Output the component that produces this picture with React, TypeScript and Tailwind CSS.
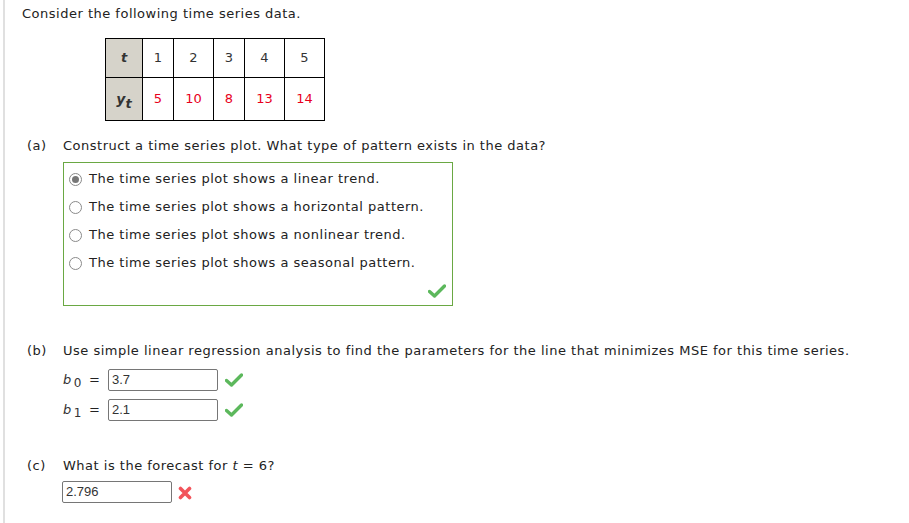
import React from 'react'

const T = ['1', '2', '3', '4', '5']
const Y = ['5', '10', '8', '13', '14']
const COLS = ['w-[31px]', 'w-[40px]', 'w-[31px]', 'w-[40px]', 'w-[40px]']

const OPTIONS = [
  'The time series plot shows a linear trend.',
  'The time series plot shows a horizontal pattern.',
  'The time series plot shows a nonlinear trend.',
  'The time series plot shows a seasonal pattern.',
]

function Check({ className = '' }: { className?: string }) {
  return (
    <svg viewBox="0 0 18 14" className={className}>
      <path d="M1.5 7.5 L6.5 12 L16.5 2" fill="none" stroke="#5cb85c" strokeWidth="3.4" strokeLinejoin="round" strokeLinecap="round" />
    </svg>
  )
}

function Cross({ className = '' }: { className?: string }) {
  return (
    <svg viewBox="0 0 14 14" className={className}>
      <path d="M2.5 2.5 L11.5 11.5 M11.5 2.5 L2.5 11.5" fill="none" stroke="#f2545b" strokeWidth="3.6" strokeLinecap="round" />
    </svg>
  )
}

function Radio({ on }: { on?: boolean }) {
  return (
    <span className="w-[13px] h-[13px] rounded-full border border-[#8a8a8a] bg-white flex items-center justify-center shrink-0">
      {on && <span className="w-[7px] h-[7px] rounded-full bg-[#777]" />}
    </span>
  )
}

function Field({ value }: { value: string }) {
  return (
    <div className="w-[110px] h-[22px] border border-[#767676] rounded-[2px] px-[3px] flex items-center font-['Liberation_Sans',Arial,sans-serif] text-[13px] tracking-normal text-[#333]">
      {value}
    </div>
  )
}

export default function App() {
  return (
    <div className="min-h-[523px] bg-white ml-[3px] border-l-2 border-[#e0e0e0] pl-[17px] pt-[6px] font-['DejaVu_Sans',Verdana,sans-serif] text-[13px] leading-[16px] tracking-[0.5px] text-[#222]">
      <p>Consider the following time series data.</p>

      {/* data table */}
      <div className="ml-[83px] mt-[16px] w-fit border-l border-t border-black tracking-normal">
        <div className="flex h-[39px]">
          <div className="w-[37px] border-r border-b border-black bg-[#d6d3ca] flex items-center justify-center italic font-bold text-[#333]">t</div>
          {T.map((v, i) => (
            <div key={v} className={`${COLS[i]} border-r border-b border-black flex items-center justify-center text-[#333]`}>{v}</div>
          ))}
        </div>
        <div className="flex h-[43px]">
          <div className="w-[37px] border-r border-b border-black bg-[#d6d3ca] flex items-center justify-center italic font-bold text-[#333]">
            <span className="text-[14px]">y</span><sub className="text-[13px] relative top-[5px]">t</sub>
          </div>
          {Y.map((v, i) => (
            <div key={i} className={`${COLS[i]} border-r border-b border-black flex items-center justify-center text-[#e8001c]`}>{v}</div>
          ))}
        </div>
      </div>

      {/* (a) */}
      <div className="flex mt-[17px]">
        <span className="w-[41px] pl-[5px]">(a)</span>
        <div>
          <p>Construct a time series plot. What type of pattern exists in the data?</p>
          <div className="mt-[8px] w-[390px] h-[144px] border border-[#6aa843] pt-[2px] pl-[5px] flex flex-col">
            {OPTIONS.map((o, i) => (
              <div key={o} className="flex items-center gap-[7px] h-[28px]">
                <Radio on={i === 0} />
                <span>{o}</span>
              </div>
            ))}
            <div className="flex-1 flex items-end justify-end pr-[6px] pb-[7px]">
              <Check className="w-[18px] h-[14px]" />
            </div>
          </div>
        </div>
      </div>

      {/* (b) */}
      <div className="flex mt-[37px]">
        <span className="w-[41px] pl-[5px]">(b)</span>
        <div>
          <p>Use simple linear regression analysis to find the parameters for the line that minimizes MSE for this time series.</p>
          <div className="mt-[10px] flex flex-col gap-[8px]">
            {[['0', '3.7'], ['1', '2.1']].map(([s, v]) => (
              <div key={s} className="flex items-center h-[22px]">
                <span className="w-[26px] text-[#333]">
                  <i>b</i><sub className="text-[12px] relative top-[3px] ml-[2px]">{s}</sub>
                </span>
                <span className="w-[19px]">=</span>
                <Field value={v} />
                <Check className="w-[18px] h-[14px] ml-[7px]" />
              </div>
            ))}
          </div>
        </div>
      </div>

      {/* (c) */}
      <div className="flex mt-[37px]">
        <span className="w-[41px] pl-[5px]">(c)</span>
        <div>
          <p>What is the forecast for <i>t</i> = 6?</p>
          <div className="mt-[7px] -ml-[1px] flex items-center">
            <Field value="2.796" />
            <Cross className="w-[14px] h-[14px] ml-[6px] mt-[2px]" />
          </div>
        </div>
      </div>
    </div>
  )
}
